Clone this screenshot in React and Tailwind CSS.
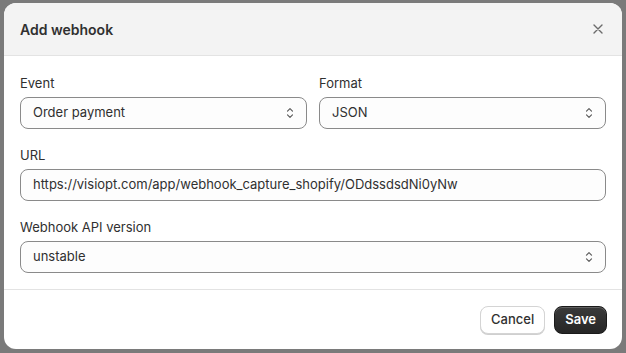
import React from "react";

function Chevron() {
  return (
    <svg width="10" height="14" viewBox="0 0 10 14" fill="none" className="shrink-0">
      <path d="M2.5 5.2 L5 2.7 L7.5 5.2" stroke="#5c5c5c" strokeWidth="1.2" strokeLinecap="round" strokeLinejoin="round" />
      <path d="M2.5 8.8 L5 11.3 L7.5 8.8" stroke="#5c5c5c" strokeWidth="1.2" strokeLinecap="round" strokeLinejoin="round" />
    </svg>
  );
}

function Select({ value }) {
  return (
    <div className="h-[32px] rounded-lg border border-[#8a8a8a] bg-[#fdfdfd] flex items-center justify-between pl-3 pr-[11px] text-[13px] text-[#303030]">
      <span>{value}</span>
      <Chevron />
    </div>
  );
}

function Field({ label, children }) {
  return (
    <div className="flex flex-col gap-1">
      <div className="text-[13px] leading-5 text-[#303030]">{label}</div>
      {children}
    </div>
  );
}

export default function App() {
  return (
    <div
      className="w-[626px] h-[353px] bg-[#7a7a7a] pt-[3px] px-[4px] pb-[4px] overflow-hidden"
      style={{ fontFamily: "Inter, 'Noto Sans', sans-serif" }}
    >
      <div className="h-full rounded-[12px] bg-white overflow-hidden flex flex-col">
        <div className="h-[53px] bg-[#f3f3f3] border-b border-[#e3e3e3] flex items-center justify-between pl-4 pr-[19px] shrink-0">
          <span className="text-[14px] font-semibold text-[#303030]">Add webhook</span>
          <svg width="10" height="10" viewBox="0 0 10 10" fill="none">
            <path d="M1 1 L9 9 M9 1 L1 9" stroke="#6b6b6b" strokeWidth="1.4" strokeLinecap="round" />
          </svg>
        </div>
        <div className="px-4 pt-[17px] pb-4 flex flex-col gap-4 border-b border-[#e3e3e3]">
          <div className="grid grid-cols-2 gap-3">
            <Field label="Event">
              <Select value="Order payment" />
            </Field>
            <Field label="Format">
              <Select value="JSON" />
            </Field>
          </div>
          <Field label="URL">
            <div className="h-[32px] rounded-lg border border-[#8a8a8a] bg-[#fdfdfd] flex items-center pl-3 text-[13px] text-[#303030]">
              https://visiopt.com/app/webhook_capture_shopify/ODdssdsdNi0yNw
            </div>
          </Field>
          <Field label="Webhook API version">
            <Select value="unstable" />
          </Field>
        </div>
        <div className="flex-1 flex items-start justify-end gap-[9px] pl-4 pr-[15px] pt-4">
          <button className="h-[28px] px-[10px] rounded-lg bg-white border border-[#d4d4d4] shadow-[0_1px_0_#cfcfcf] text-[13px] font-medium text-[#303030]">
            Cancel
          </button>
          <button className="h-[28px] px-[10px] rounded-lg bg-gradient-to-b from-[#3a3a3a] to-[#262626] border border-[#1a1a1a] shadow-[inset_0_1px_0_rgba(255,255,255,0.2)] text-[13px] font-semibold text-white">
            Save
          </button>
        </div>
      </div>
    </div>
  );
}
